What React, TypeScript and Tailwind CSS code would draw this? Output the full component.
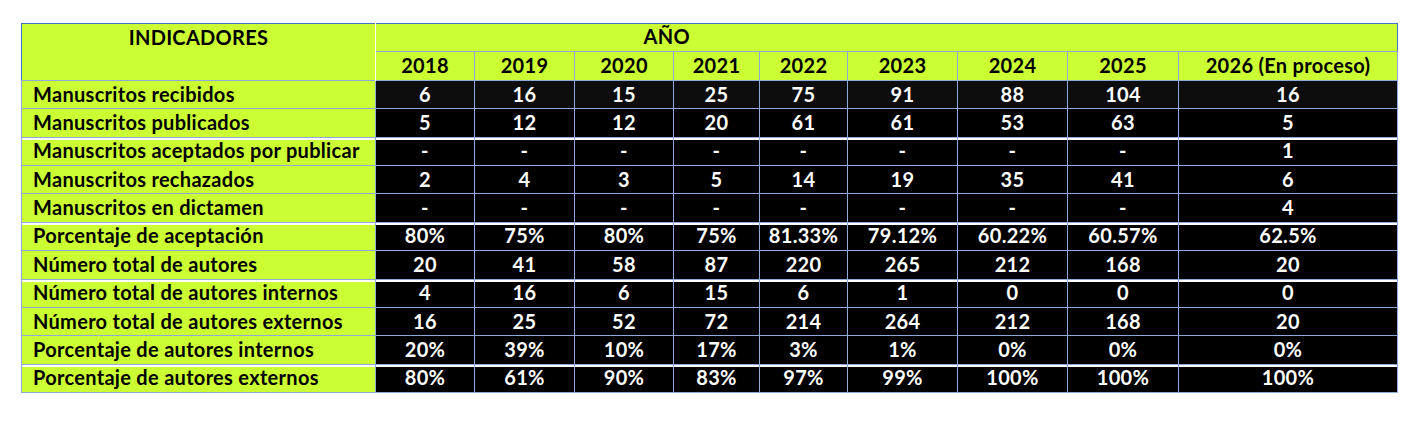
import React from "react";

const years = ["2018", "2019", "2020", "2021", "2022", "2023", "2024", "2025", "2026 (En proceso)"];
const widths = [354, 99, 100, 99, 86, 88, 110, 110, 111, 219];

interface Row {
  label: string;
  values: string[];
  sep?: boolean;
}

const rows: Row[] = [
  { label: "Manuscritos recibidos", values: ["6", "16", "15", "25", "75", "91", "88", "104", "16"] },
  { label: "Manuscritos publicados", values: ["5", "12", "12", "20", "61", "61", "53", "63", "5"] },
  { label: "Manuscritos aceptados por publicar", values: ["-", "-", "-", "-", "-", "-", "-", "-", "1"], sep: true },
  { label: "Manuscritos rechazados", values: ["2", "4", "3", "5", "14", "19", "35", "41", "6"] },
  { label: "Manuscritos en dictamen", values: ["-", "-", "-", "-", "-", "-", "-", "-", "4"] },
  { label: "Porcentaje de aceptación", values: ["80%", "75%", "80%", "75%", "81.33%", "79.12%", "60.22%", "60.57%", "62.5%"], sep: true },
  { label: "Número total de autores", values: ["20", "41", "58", "87", "220", "265", "212", "168", "20"] },
  { label: "Número total de autores internos", values: ["4", "16", "6", "15", "6", "1", "0", "0", "0"], sep: true },
  { label: "Número total de autores externos", values: ["16", "25", "52", "72", "214", "264", "212", "168", "20"] },
  { label: "Porcentaje de autores internos", values: ["20%", "39%", "10%", "17%", "3%", "1%", "0%", "0%", "0%"] },
  { label: "Porcentaje de autores externos", values: ["80%", "61%", "90%", "83%", "97%", "99%", "100%", "100%", "100%"], sep: true },
];

export default function App() {
  return (
    <div className="min-h-[435px] bg-white pl-[21px] pt-[23px] font-['Lato','Liberation_Sans',sans-serif] text-[20px] font-bold leading-none tracking-[0.3px]">
      <table className="w-[1376px] table-fixed border-collapse border border-[#4472c4]">
        <colgroup>
          {widths.map((w, i) => (
            <col key={i} style={{ width: w }} />
          ))}
        </colgroup>
        <thead>
          <tr className="h-[28px] bg-[#ccff33] text-black">
            <th rowSpan={2} className="border-r border-white pt-[3px] align-top font-bold">
              INDICADORES
            </th>
            <th colSpan={6} className="border-b border-[#8eaadb] pb-[3px] text-center font-bold">
              AÑO
            </th>
            <th colSpan={3} className="border-b border-[#8eaadb]"></th>
          </tr>
          <tr className="h-[29px] bg-[#ccff33] text-black">
            {years.map((y) => (
              <th key={y} className="border-x border-[#8eaadb] pb-[2px] text-center font-bold">
                {y}
              </th>
            ))}
          </tr>
        </thead>
        <tbody>
          {rows.map((r, ri) => (
            <tr key={r.label} className="h-[28.36px]">
              <td
                className={`border border-[#8eaadb] bg-[#ccff33] pb-[2px] pl-[11px] text-black ${
                  r.sep ? "shadow-[inset_0_2px_0_#ffffff]" : ""
                }`}
              >
                {r.label}
              </td>
              {r.values.map((v, vi) => (
                <td
                  key={vi}
                  className={`border border-[#8eaadb] pb-[2px] text-center text-white ${
                    ri === 0 ? "bg-[#0d0d0d]" : "bg-black"
                  } ${r.sep ? "shadow-[inset_0_2px_0_#ffffff]" : ""}`}
                >
                  {v}
                </td>
              ))}
            </tr>
          ))}
        </tbody>
      </table>
    </div>
  );
}
